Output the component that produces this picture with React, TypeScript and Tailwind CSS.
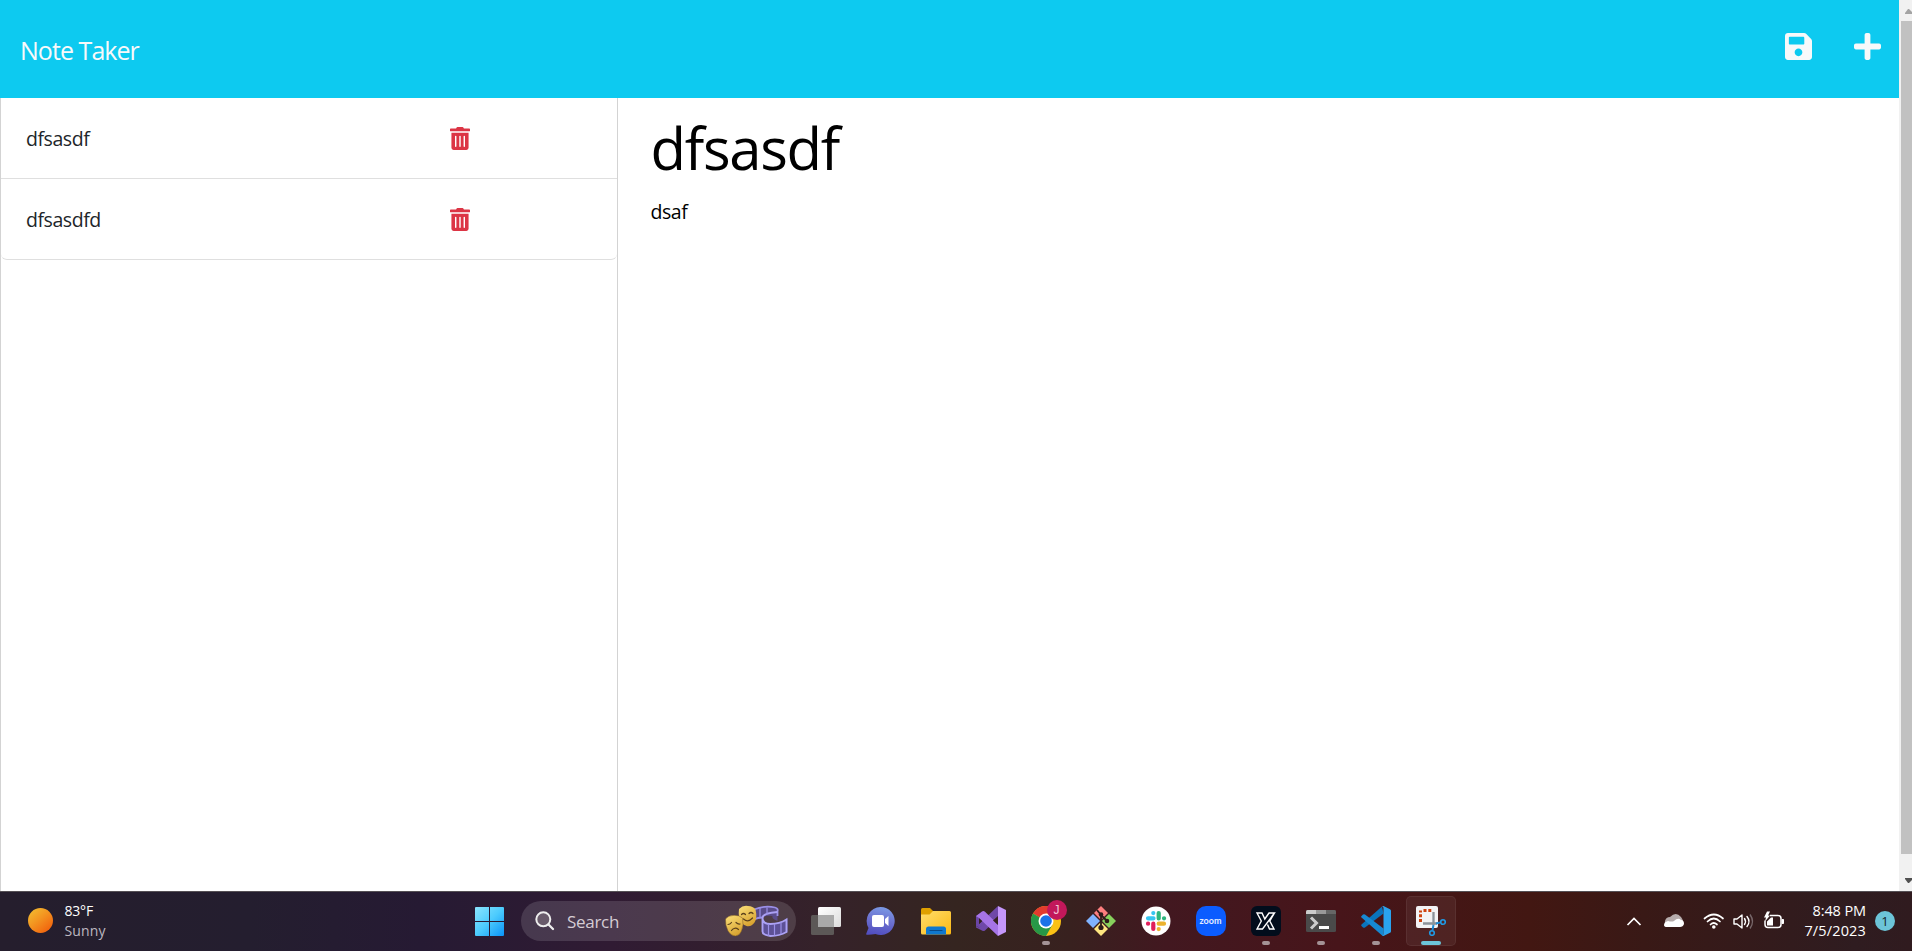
import type { ReactNode } from "react";
import { FaPlus, FaSave, FaTrashAlt } from "react-icons/fa";

const notes = ["dfsasdf", "dfsasdfd"];

function Header() {
  return (
    <header className="flex h-[98px] shrink-0 justify-between bg-[#0dcaf0] text-[#f8f9fa]">
      <h2 className="pt-[31px] pl-[20px] text-[25px] leading-[38px] tracking-[-0.95px]">Note Taker</h2>
      <div className="flex gap-[42px] pt-[31px] pr-[18px]">
        <FaSave className="h-[31px] w-[27px]" />
        <FaPlus className="h-[31px] w-[27px]" />
      </div>
    </header>
  );
}

function NoteRow({ title, last }: { title: string; last: boolean }) {
  return (
    <li
      className={
        last
          ? "flex h-[81px] items-center rounded-b-[6px] border-b border-[#dfdfdf] pl-[25px]"
          : "flex h-[81px] items-center border-b border-[#dfdfdf] pl-[25px]"
      }
    >
      <span className="w-[424px] pt-[2px] text-[19.5px] leading-[30px] tracking-[-0.45px] text-[#212529]">{title}</span>
      <FaTrashAlt className="h-[23px] w-[20px] text-[#dc3545]" />
    </li>
  );
}

function Scrollbar() {
  return (
    <div className="flex w-[13px] shrink-0 flex-col items-end justify-between overflow-hidden bg-[#f1f1f1]">
      <svg className="h-[21px] w-[11px]" viewBox="0 0 11 21">
        <path d="M4 14v-1l3-4h1l3 3v2z" fill="#a3a3a3" />
      </svg>
      <div className="w-[11px] flex-1 bg-[#c1c1c1]" />
      <svg className="h-[37px] w-[11px]" viewBox="0 0 11 37">
        <path d="M4 24v1l3 4h1l3-3v-2z" fill="#505050" />
      </svg>
    </div>
  );
}

function StartIcon() {
  return (
    <svg className="h-[29px] w-[29px]" viewBox="0 0 29 29">
      <defs>
        <linearGradient id="win" x1="0" y1="0" x2="29" y2="29" gradientUnits="userSpaceOnUse">
          <stop stopColor="#8be4fd" />
          <stop offset="0.5" stopColor="#4ccbfd" />
          <stop offset="1" stopColor="#0a93f8" />
        </linearGradient>
      </defs>
      <path d="M0 1q0-1 1-1h13v14H0zM15 0h13q1 0 1 1v13H15zM0 15h14v14H1q-1 0-1-1zM15 15h14v13q0 1-1 1H15z" fill="url(#win)" />
    </svg>
  );
}

function SearchArt() {
  return (
    <svg className="h-[32px] w-[63px]" viewBox="0 0 63 32">
      <defs>
        <linearGradient id="mask" x1="0" y1="0" x2="0.5" y2="1">
          <stop stopColor="#fbe07a" />
          <stop offset="1" stopColor="#d9a432" />
        </linearGradient>
      </defs>
      <path d="M28 4.500Q40 0 50 2.500q3 1 2.500 4V16q-6-2-5-5-8-1-19 4z" fill="#5a4c8a" />
      <path d="M37 13q0 6 8 6 10 0 17.500-5v13q-7 4-17.500 4-8-1-8-4z" fill="#5d5196" />
      <path d="M29 4.500Q40 0 50 2.500q3.500 1 2.500 4v4.500M29 14.500q4-2 8-2" fill="none" stroke="#9a8fe6" strokeWidth="1.800" />
      <path d="M52.500 7Q37.500 8 37.500 13q0 6 8 6 9 0 16-4.500v12.500q-7 4-16 4-8-1-8-4.500V13" fill="none" stroke="#aba1f4" strokeWidth="1.900" />
      <path d="M35 3v10M42 2.500v7M43.500 19v12M49.500 19v11.500M56 17v12" stroke="#9a8fe6" strokeWidth="1.200" />
      <path d="M14 4Q18 0 23 1q5 .2 7.500 3.500 2 9-1 13-3 4.500-8 3.500-6-2-7.500-9-.5-5 0-8z" fill="url(#mask)" />
      <path d="M.5 14Q3 10.500 9 10.300q5-.3 8.500 2.700 1.500 7-1 13-2 4.800-6 5-4.500 0-7.500-5Q0 20 .5 14z" fill="url(#mask)" stroke="#7c5a26" strokeWidth="0.500" />
      <path d="M16.500 9.500q2-2 4 0M24 8.500q2-2 4 0M18.500 14q4.500 4 9-1M3 19.500q2 0 3.500-2M11 17.500q2 2 4 1.500M6.500 25.500q3-4 7-1" fill="none" stroke="#5d421c" strokeWidth="1.200" strokeLinecap="round" />
    </svg>
  );
}

function TaskView() {
  return (
    <svg className="h-[30px] w-[30px]" viewBox="0 0 30 30">
      <defs>
        <linearGradient id="tv" x1="0" y1="0" x2="1" y2="1">
          <stop stopColor="#fff" />
          <stop offset="1" stopColor="#dcdcdc" />
        </linearGradient>
      </defs>
      <rect x="7" y="1" width="23" height="20" rx="1.500" fill="url(#tv)" />
      <rect x="0" y="9" width="23" height="20" rx="1.500" fill="#5c5857" />
      <rect x="7" y="9" width="16" height="12" fill="#a9a9a9" />
    </svg>
  );
}

function ChatIcon() {
  return (
    <svg className="h-[30px] w-[30px]" viewBox="0 0 30 30">
      <defs>
        <linearGradient id="chat" x1="0.700" y1="0" x2="0.500" y2="1">
          <stop stopColor="#7b9be6" />
          <stop offset="0.500" stopColor="#6c71cf" />
          <stop offset="1" stopColor="#524fc0" />
        </linearGradient>
      </defs>
      <path d="M14.500 1a14 14 0 1 1-5 27Q5 29 .5 28.800 0 28 .5 27L2.500 22A14 14 0 0 1 14.500 1z" fill="url(#chat)" />
      <rect x="6" y="9" width="12" height="12" rx="2" fill="#fff" />
      <path d="M19 13l3.500-3v10L19 17z" fill="#fff" />
    </svg>
  );
}

function FolderIcon() {
  return (
    <svg className="h-[30px] w-[30px]" viewBox="0 0 30 30">
      <defs>
        <linearGradient id="fold" x1="0" y1="0" x2="1" y2="1">
          <stop stopColor="#ffdd6c" />
          <stop offset="1" stopColor="#fbb914" />
        </linearGradient>
      </defs>
      <path d="M0 3.500Q0 2 1.500 2H9l3 3v6H0z" fill="#dfa000" />
      <path d="M0 8.500h8.500L12 5h16.500Q30 5 30 6.500V27q0 1.500-1.500 1.500h-27Q0 28.500 0 27z" fill="url(#fold)" />
      <path d="M5 28.500V23q0-2.500 2.500-2.500h15Q25 20.500 25 23v5.500z" fill="#0f78cf" />
      <path d="M9 24.500h12" stroke="#074a8b" strokeWidth="1.200" strokeLinecap="round" />
    </svg>
  );
}

function VisualStudio() {
  return (
    <svg className="h-[30px] w-[30px]" viewBox="0 0 30 30">
      <path d="M0 10l3-1.500v13L0 20z" fill="#6a45a5" />
      <path d="M3 21.500L22 6v6L9 24.500q-1.500 1-3 0l-6-3V20z" fill="#6f48a8" />
      <path d="M22 0v8L3 22v-4z" fill="#6f48a8" />
      <path d="M0 10l6-4.500q1.500-1 3 .3L22 18.500V30L3 12z" fill="#a674e6" />
      <path d="M22 0l8 4v22l-8 4z" fill="#c597fb" />
      <path d="M3 12.500v5.500l3-2.700z" fill="#35231f" />
      <path d="M22 10l-5 4.500 5 4.500z" fill="#35231f" />
    </svg>
  );
}

function ChromeIcon() {
  return (
    <span className="relative flex">
      <svg className="h-[30px] w-[30px]" viewBox="0 0 30 30">
        <circle cx="15" cy="15" r="15" fill="#fbc116" />
        <path d="M15 15L2 7.500A15 15 0 0 1 28 7.500H15z" fill="#e33b2e" />
        <path d="M15 15L2 7.500A15 15 0 0 0 15 30l6.500-11.500z" fill="#279847" />
        <circle cx="15" cy="15" r="7.500" fill="#fff" />
        <circle cx="15" cy="15" r="5.800" fill="#1b72e8" />
      </svg>
      <span className="absolute -top-[6px] left-[16px] flex h-[20px] w-[20px] items-center justify-center rounded-full bg-[#c2185b] font-['Liberation_Sans',sans-serif] text-[12px] leading-none text-[#f0c4d6]">
        J
      </span>
    </span>
  );
}

function GitIcon() {
  return (
    <svg className="h-[30px] w-[30px]" viewBox="0 0 30 30">
      <path d="M15 0l7 7-7 7-7-7z" fill="#fd7e7e" />
      <path d="M7 8l7 7-7 7-7-7z" fill="#80b3ff" />
      <path d="M23 8l7 7-7 7-7-7z" fill="#87d15c" />
      <path d="M15 16l7 7-7 7-7-7z" fill="#ffe680" />
      <path d="M11 4l4 5v13M15 9l6 6" stroke="#2d1b1a" strokeWidth="1.800" fill="none" />
      <circle cx="15" cy="8.500" r="2.300" fill="#2d1b1a" />
      <circle cx="21" cy="15" r="2.300" fill="#2d1b1a" />
      <circle cx="15" cy="21.500" r="2.600" fill="#2d1b1a" />
    </svg>
  );
}

function SlackIcon() {
  return (
    <svg className="h-[30px] w-[30px]" viewBox="0 0 30 30">
      <circle cx="15" cy="15" r="14.500" fill="#fff" />
      <g strokeWidth="4.200" strokeLinecap="round">
        <path d="M7 12.300h5.500M12.300 7v.1" stroke="#36c5f0" />
        <path d="M17.700 7v5.500M23 12.300h.1" stroke="#2eb67d" />
        <path d="M17.700 17.700H23M17.700 23v.1" stroke="#ecb22e" />
        <path d="M12.300 17.700V23M7 17.700h.1" stroke="#e01e5a" />
      </g>
    </svg>
  );
}

function ZoomIcon() {
  return (
    <span className="flex h-[30px] w-[30px] items-center justify-center rounded-[10px] bg-[#0b5cff] pb-[2px] font-['Lato',sans-serif] text-[9px] leading-none font-bold text-[#e6eeff]">
      zoom
    </span>
  );
}

function XIcon() {
  return (
    <svg className="h-[30px] w-[30px]" viewBox="0 0 30 30">
      <rect width="30" height="30" rx="6" fill="#020d1c" />
      <path
        d="M6 7h5l2.800 6L18 7h5.500L11.500 23H6l4.300-8zM23.500 7l-4.700 8 4.200 8h-4.500l-2-4.500"
        fill="none"
        stroke="#fff"
        strokeWidth="1.400"
      />
    </svg>
  );
}

function TerminalIcon() {
  return (
    <svg className="h-[30px] w-[30px]" viewBox="0 0 30 30">
      <rect y="4" width="30" height="22" rx="1.500" fill="#4a4a4a" />
      <path d="M0 8V5.500Q0 4 1.500 4H10v4z" fill="#cccccc" />
      <path d="M10 4h10v4H10z" fill="#999" />
      <path d="M20 4h8.500Q30 4 30 5.500V8H20z" fill="#666" />
      <path d="M5 11.500l5.500 5.500L5 22.500" fill="none" stroke="#ccc" strokeWidth="3" />
      <path d="M13 20h10v3H13z" fill="#fff" />
    </svg>
  );
}

function CodeIcon() {
  return (
    <svg className="h-[30px] w-[30px]" viewBox="0 0 30 30">
      <path d="M2 21.500L.5 20q-.7-.7 0-1.500L21 .5l1.500 7L4 21.500q-1 .7-2 0z" fill="#0a74bd" />
      <path d="M2 8.500q1-.7 2 0L22.500 22.500V30q-1 0-2-1L.5 11.500q-.7-.8 0-1.500z" fill="#1688d2" />
      <path d="M21 .5q1-.7 2-.3l6 3q1 .5 1 1.500v20.600q0 1-1 1.500l-6 3q-1 .4-2-.3 1.500 0 1.500-1.500V2q0-1.500-1.500-1.500z" fill="#2aa3ee" />
    </svg>
  );
}

function SnipIcon() {
  return (
    <svg className="h-[30px] w-[30px]" viewBox="0 0 30 30">
      <rect x="0" y="0" width="22" height="22" rx="2" fill="#f3f3f5" />
      <path d="M4.500 16V4.500M7.500 4.500H16" fill="none" stroke="#cf4310" strokeWidth="3" strokeDasharray="3 1.800" />
      <path d="M17.500 6v13M7 17.500h14" stroke="#8c9299" strokeWidth="2.300" />
      <path d="M17.500 19l-1 5M20 17.500l4-1" stroke="#1b8ad6" strokeWidth="2" />
      <circle cx="16" cy="27" r="2.300" fill="none" stroke="#209be6" strokeWidth="1.600" />
      <circle cx="27" cy="16" r="2.300" fill="none" stroke="#209be6" strokeWidth="1.600" />
    </svg>
  );
}

type Mark = "none" | "running" | "active";

function TaskButton({ children, mark = "none" }: { children: ReactNode; mark?: Mark }) {
  return (
    <div
      className={
        mark === "active"
          ? "relative mx-[2.5px] flex h-[50px] w-[50px] items-center justify-center rounded-[5px] border border-white/6 bg-white/6"
          : "relative mx-[2.5px] flex h-[50px] w-[50px] items-center justify-center"
      }
    >
      {children}
      {mark === "running" && <span className="absolute bottom-[1px] h-[4px] w-[8px] rounded-full bg-[#a49396]" />}
      {mark === "active" && <span className="absolute bottom-0 h-[4px] w-[20px] rounded-full bg-[#6cc4d8]" />}
    </div>
  );
}

function Tray() {
  return (
    <div className="flex flex-1 items-center">
      <svg className="mt-[1px] ml-[166.5px] h-[30px] w-[160px]" viewBox="0 0 160 30">
        <path d="M2.500 18l6.500-6.500 6.500 6.500" fill="none" stroke="#fff" strokeWidth="1.700" />
        <path d="M40 14q1-4 5-4 6-6 11 0 3 4 2 8H43q-4-1-3-4z" fill="#b6acac" />
        <path d="M39 18q0-3 4-4 4 1 6 0 4-4 7-1 3 0 3 4-1 3-4 3H42q-3 0-3-2z" fill="#fff" />
        <g fill="none" stroke="#fff" strokeWidth="1.700" strokeLinecap="round">
          <path d="M79.500 11.500q9.500-8 18.500 0" />
          <path d="M82.500 14.500q6.300-6 12.500 0" />
          <path d="M85.500 17.500q3.200-3 6.500 0" />
        </g>
        <circle cx="88.800" cy="20" r="1.800" fill="#fff" />
        <path d="M109 12h3l5-4v13l-5-4h-3z" fill="none" stroke="#fff" strokeWidth="1.400" strokeLinejoin="round" />
        <path d="M119.500 11.500q2 3 0 6M122 9.500q4 5 0 10" fill="none" stroke="#fff" strokeWidth="1.400" strokeLinecap="round" />
        <path d="M125 7.500q5 7 0 14" fill="none" stroke="#77676a" strokeWidth="1.400" />
        <path d="M145 8.500h8q3 0 3 3v6q0 3-3 3h-10q-3 0-3-3v-4" fill="none" stroke="#fff" strokeWidth="1.500" />
        <path d="M157 12.500h1.500v4H157z" stroke="#fff" fill="#fff" strokeWidth="1" />
        <path d="M142 4.500l-3 6h2l-1 4 5-6h-2l2-4zM142 14.500l4-4h2v8h-6z" fill="#fff" />
      </svg>
      <div className="w-[81.500px] text-right text-[14.500px] leading-[20px] text-white">
        <div className="tracking-[-0.1px]">8:48 PM</div>
        <div className="tracking-[0.15px]">7/5/2023</div>
      </div>
      <div className="ml-[9px] flex h-[20px] w-[20px] items-center justify-center rounded-full bg-[#6cc4d8] text-[13px] leading-none text-[#14252b]">
        1
      </div>
    </div>
  );
}

function Taskbar() {
  return (
    <footer className="flex h-[60px] shrink-0 items-center border-t border-[#555055] bg-[linear-gradient(90deg,#251e2d_0%,#241e2f_13%,#261a33_22%,#301b33_32%,#35222a_43%,#352520_50%,#38211f_56%,#421820_61%,#47151a_70%,#421712_80%,#391916_86%,#2f1c20_97%,#301b1f_100%)] pb-[1px]">
      <div className="mt-[-1px] flex w-[475px] items-center pl-[27.500px]">
        <div className="h-[25px] w-[25px] rounded-full bg-[linear-gradient(140deg,#f2bd30_5%,#f39420_45%,#f1660f_85%)]" />
        <div className="ml-[12px] text-[14px] leading-[20px]">
          <div className="tracking-[-0.2px] text-white">83°F</div>
          <div className="tracking-[0.15px] text-[#bdb8c0]">Sunny</div>
        </div>
      </div>
      <StartIcon />
      <div className="ml-[17px] flex h-[40px] w-[275px] items-center rounded-full bg-white/13 pr-[8px] pl-[14px]">
        <svg className="h-[20px] w-[20px]" viewBox="0 0 20 20">
          <circle cx="8.300" cy="8.300" r="7" fill="#695b6b" stroke="#eee" strokeWidth="2" />
          <path d="M13.500 13.500l4.500 4.500" stroke="#eee" strokeWidth="2.300" strokeLinecap="round" />
        </svg>
        <span className="flex-1 pt-[1px] pl-[12px] text-[17px] tracking-[-0.3px] text-[#d5ccd4]">Search</span>
        <SearchArt />
      </div>
      <div className="ml-[2px] flex items-center">
        <TaskButton><TaskView /></TaskButton>
        <TaskButton><ChatIcon /></TaskButton>
        <TaskButton><FolderIcon /></TaskButton>
        <TaskButton><VisualStudio /></TaskButton>
        <TaskButton mark="running"><ChromeIcon /></TaskButton>
        <TaskButton><GitIcon /></TaskButton>
        <TaskButton><SlackIcon /></TaskButton>
        <TaskButton><ZoomIcon /></TaskButton>
        <TaskButton mark="running"><XIcon /></TaskButton>
        <TaskButton mark="running"><TerminalIcon /></TaskButton>
        <TaskButton mark="running"><CodeIcon /></TaskButton>
        <TaskButton mark="active"><SnipIcon /></TaskButton>
      </div>
      <Tray />
    </footer>
  );
}

export default function App() {
  return (
    <div className="flex h-[951px] w-[1912px] flex-col overflow-hidden bg-white font-['Open_Sans','Noto_Sans',sans-serif]">
      <div className="flex min-h-0 flex-1">
        <div className="flex flex-1 flex-col">
          <Header />
          <main className="flex flex-1">
            <ul className="w-[618px] border-x border-[#d3d3d3]">
              {notes.map((note, i) => (
                <NoteRow key={note} title={note} last={i === notes.length - 1} />
              ))}
            </ul>
            <section className="pt-[12px] pl-[32.500px] text-black">
              <h1 className="text-[58px] leading-[76px] font-normal tracking-[-1.3px]">dfsasdf</h1>
              <p className="pt-[11px] text-[19.5px] leading-[30px] tracking-[-0.45px]">dsaf</p>
            </section>
          </main>
        </div>
        <Scrollbar />
      </div>
      <Taskbar />
    </div>
  );
}
